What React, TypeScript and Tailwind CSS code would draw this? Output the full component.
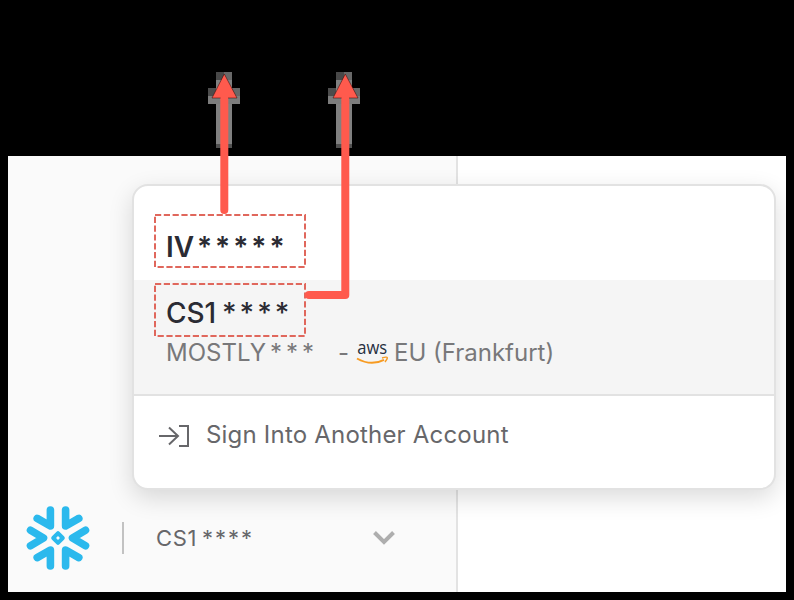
const halo: [number, number, number, number, string][] = [
  [0, 0, 8, 8, "#484848"],
  [8, 0, 8, 8, "#686868"],
  [0, 8, 16, 8, "#808080"],
  [-8, 16, 8, 8, "#4c4c4c"],
  [0, 16, 16, 8, "#808080"],
  [16, 16, 8, 8, "#686868"],
  [-8, 24, 32, 8, "#7c7c7c"],
  [0, 32, 16, 40, "#808080"],
  [0, 72, 16, 4, "#505050"],
];

function Annotations() {
  return (
    <svg className="pointer-events-none absolute inset-0" width="794" height="600" viewBox="0 0 794 600">
      {[216, 336].map((x) =>
        halo.map(([dx, dy, w, h, c], i) => (
          <rect key={`${x}-${i}`} x={x + dx} y={72 + dy} width={w} height={h} fill={c} shapeRendering="crispEdges" />
        )),
      )}
      <g fill="none" stroke="#e0675c" strokeWidth="2" strokeDasharray="6.2 2.6">
        <rect x="155" y="215" width="150" height="52" />
        <rect x="155" y="284" width="150" height="52" />
      </g>
      <g fill="none" stroke="#ff5a4d" strokeWidth="8" strokeLinecap="round" strokeLinejoin="round">
        <path d="M224.3 210V96" />
        <path d="M309 295H345.3V96" />
      </g>
      <path d="M224.3 74L237 98H212ZM345.3 74L358 98H333Z" fill="#ff5a4d" stroke="#300" strokeWidth=".5" />
      <path d="M220.6 96h7.4v4h-7.4zM341.6 96h7.4v4h-7.4z" fill="#ff5a4d" />
    </svg>
  );
}

function AwsLogo() {
  return (
    <svg className="absolute left-[222px] top-[62px]" width="34" height="24" viewBox="0 0 34 24">
      <text x="1.2" y="12.3" fontFamily="Open Sans" fontSize="18" fontWeight="500" textLength="30" lengthAdjust="spacingAndGlyphs" fill="#252f3e">aws</text>
      <path d="M1 16.5Q15 24.5 28 17.8" fill="none" stroke="#f79b22" strokeWidth="2" />
      <path d="M26 16q5-1.5 5.3-.3T29 20" fill="none" stroke="#f79b22" strokeWidth="1.4" />
    </svg>
  );
}

function SnowflakeLogo() {
  return (
    <svg width="66" height="66" viewBox="0 0 66 66" fill="none" stroke="#2bb9ed" strokeWidth="7.6" strokeLinecap="round" strokeLinejoin="round">
      <path d="M25.4 5v16L12.2 13.4M40.6 5v16L53.8 13.4M25.4 61V45L12.2 52.6M40.6 61V45L53.8 52.6M5.5 25.3L18.5 33L5.5 40.7M60.5 25.3L47.5 33L60.5 40.7" />
      <path d="M33 28.2L37.8 33L33 37.8L28.2 33Z" strokeWidth="4" />
    </svg>
  );
}

export default function App() {
  return (
    <div className="relative h-[600px] w-[794px] overflow-hidden bg-black px-2 pt-[156px] font-['Inter',sans-serif]">
      <div className="relative flex h-[436px] w-[778px] overflow-hidden bg-white">
        <aside className="flex w-[450px] items-end border-r-2 border-[#e3e3e3] bg-[#fafafa]">
          <div className="flex h-[108px] w-full items-center pl-[17px]">
            <SnowflakeLogo />
            <div className="ml-[31px] h-8 w-0.5 bg-[#c2c2c2]" />
            <div className="ml-8 flex w-[217px] items-center whitespace-nowrap text-[22px] text-[#67676a]">
              <span className="w-[46px] tracking-[0.6px]">CS1</span>
              <span className="tracking-[2px]">****</span>
            </div>
            <svg width="22" height="14" viewBox="0 0 22 14" fill="none" stroke="#aeaeae" strokeWidth="4">
              <path d="M1.5 1.5L11 11L20.5 1.5" />
            </svg>
          </div>
        </aside>
        <div className="absolute left-[124px] top-7 h-[306px] w-[644px] overflow-hidden rounded-[16px] border-2 border-[#e2e2e2] bg-white shadow-[0_8px_24px_rgba(0,0,0,0.14)]">
          <div className="flex h-[94px] items-center pl-8 pt-[28px] text-[28px] font-semibold text-[#2b2b33]">
            <span className="w-[31px]">IV</span>
            <span className="tracking-[3px]">*****</span>
          </div>
          <div className="relative h-[114px] bg-[#f5f5f5] pl-8 text-[#2b2b33]">
            <div className="flex h-[62px] items-center pt-1 text-[28px] font-medium">
              <span className="w-[56px]">CS1</span>
              <span className="tracking-[3px]">****</span>
            </div>
            <div className="flex h-[22px] items-center whitespace-nowrap text-[24px] text-[#78787a]">
              <span className="w-[104px]">MOSTLY</span>
              <span className="w-[68px] tracking-[4px]">***</span>
              <span className="w-[56px]">-</span>
              <span>EU (Frankfurt)</span>
            </div>
            <AwsLogo />
          </div>
          <div className="flex h-[94px] items-start border-t-2 border-[#e2e2e2] pl-[25px] pt-[24px] text-[24px] text-[#67676a]">
            <svg className="mt-[3px] shrink-0" width="32" height="26" viewBox="0 0 32 26" fill="none" stroke="#67676a" strokeWidth="2">
              <path d="M0 13H19M10 4.5L19 13L10 21.5M20 3H29V23H20" />
            </svg>
            <span className="ml-[15px] whitespace-nowrap leading-[30px] tracking-[0.2px]">Sign Into Another Account</span>
          </div>
        </div>
      </div>
      <Annotations />
    </div>
  );
}
